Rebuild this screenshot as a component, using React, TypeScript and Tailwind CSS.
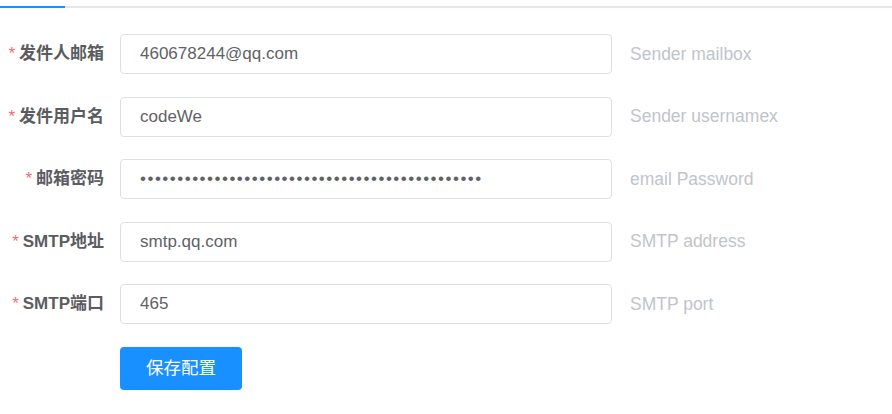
const fields = [
  { label: "发件人邮箱", value: "460678244@qq.com", hint: "Sender mailbox", type: "text" },
  { label: "发件用户名", value: "codeWe", hint: "Sender usernamex", type: "text" },
  { label: "邮箱密码", value: "x".repeat(46), hint: "email Password", type: "password" },
  { label: "SMTP地址", value: "smtp.qq.com", hint: "SMTP address", type: "text" },
  { label: "SMTP端口", value: "465", hint: "SMTP port", type: "text" },
];

const font = { fontFamily: '"Liberation Sans", "Noto Sans CJK SC", sans-serif' };

export default function App() {
  return (
    <div className="w-[892px] h-[414px] bg-white overflow-hidden" style={font}>
      <div className="pt-[6px]">
        <div className="flex h-[2px] bg-[#e4e7ed]">
          <div className="w-[65px] bg-[#1890ff]" />
        </div>
      </div>
      <form className="mt-[26px] flex flex-col gap-[22.5px]">
        {fields.map((f) => (
          <div key={f.label} className="flex items-center h-[40px]">
            <label className="w-[120px] pr-4 flex justify-end items-center text-[17px] font-bold text-[#5a5c61]">
              <span className="text-[#f56c6c] mr-[4px] font-normal text-[17px]">*</span>
              {f.label}
            </label>
            <input
              type={f.type}
              defaultValue={f.value}
              readOnly
              className={
                f.type === "password"
                  ? "w-[492px] h-[40px] border border-[#dcdfe6] rounded-[4px] pl-[19px] pr-3 text-[17px] tracking-[1.5px] text-[#606266] outline-none"
                  : "w-[492px] h-[40px] border border-[#dcdfe6] rounded-[4px] pl-[19px] pr-3 text-[17px] text-[#606266] outline-none"
              }
            />
            <span className="ml-[18px] text-[17.5px] text-[#c0c4cc]">{f.hint}</span>
          </div>
        ))}
        <div className="pl-[120px]">
          <button
            type="button"
            className="w-[122px] h-[43px] rounded-[4px] bg-[#1890ff] text-white text-[17.5px]"
          >
            保存配置
          </button>
        </div>
      </form>
    </div>
  );
}
